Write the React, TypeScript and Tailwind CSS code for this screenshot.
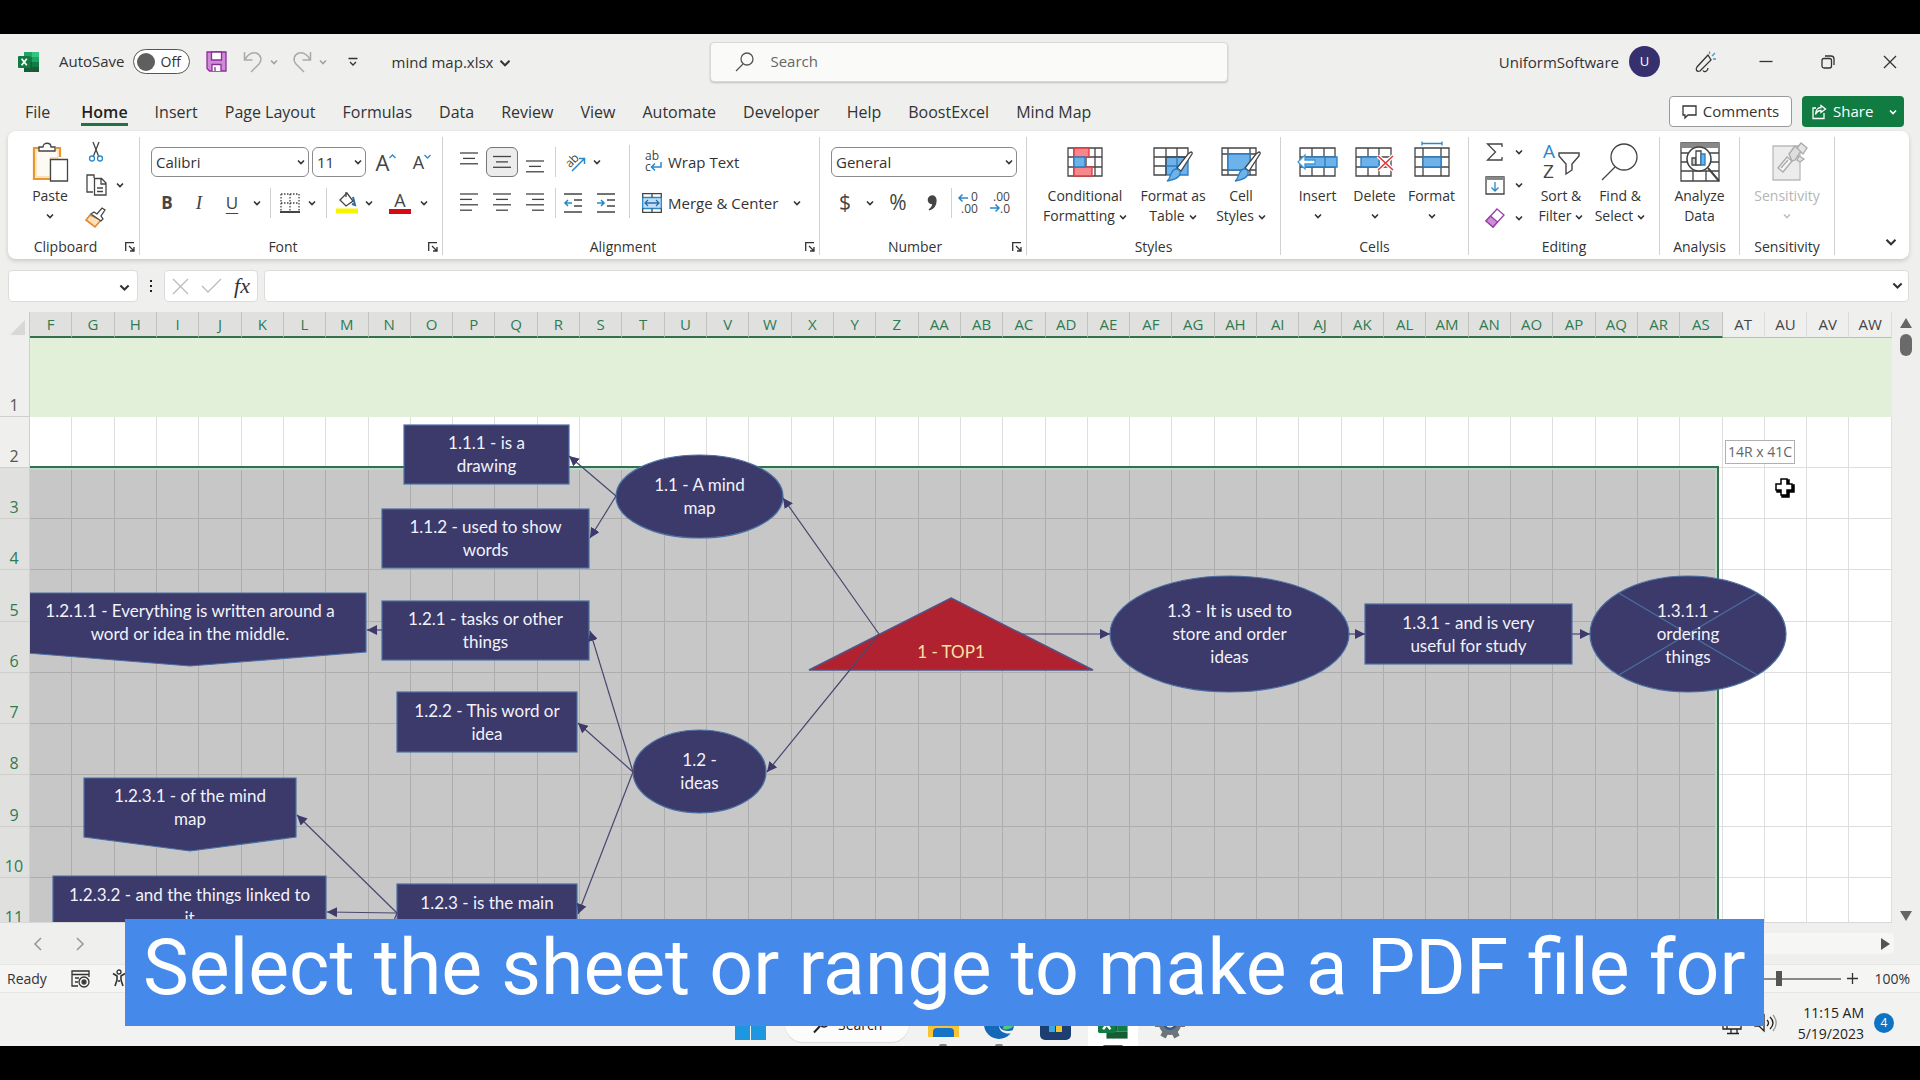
import type { ReactNode } from "react";

const TABS = [
  "File",
  "Home",
  "Insert",
  "Page Layout",
  "Formulas",
  "Data",
  "Review",
  "View",
  "Automate",
  "Developer",
  "Help",
  "BoostExcel",
  "Mind Map",
];

const COLUMNS = [
  ..."FGHIJKLMNOPQRSTUVWXYZ".split(""),
  ..."ABCDEFGHIJKLMNOPQRSTUVW".split("").map((c) => `A${c}`),
];
const SELECTED_COLUMNS = 40;

const ROW_HEIGHTS = [79, 51, 51, 51, 52, 51, 51, 51, 52, 51, 51];

type Shape = "rect" | "ellipse" | "pennant" | "triangle" | "junction";

type MapNode = {
  x: number;
  y: number;
  w: number;
  h: number;
  shape: Shape;
  lines: string[];
};

const NODES: MapNode[] = [
  { x: 374, y: 87, w: 165, h: 59, shape: "rect", lines: ["1.1.1 - is a", "drawing"] },
  { x: 352, y: 171, w: 207, h: 59, shape: "rect", lines: ["1.1.2 - used to show", "words"] },
  { x: -16, y: 255, w: 352, h: 59, shape: "pennant", lines: ["1.2.1.1 - Everything is written around a", "word or idea in the middle."] },
  { x: 352, y: 263, w: 207, h: 59, shape: "rect", lines: ["1.2.1 - tasks or other", "things"] },
  { x: 367, y: 354, w: 180, h: 60, shape: "rect", lines: ["1.2.2 - This word or", "idea"] },
  { x: 54, y: 440, w: 212, h: 59, shape: "pennant", lines: ["1.2.3.1 - of the mind", "map"] },
  { x: 23, y: 538, w: 273, h: 60, shape: "pennant", lines: ["1.2.3.2 - and the things linked to", "it"] },
  { x: 367, y: 546, w: 180, h: 38, shape: "rect", lines: ["1.2.3 - is the main"] },
  { x: 586, y: 117, w: 167, h: 83, shape: "ellipse", lines: ["1.1 - A mind", "map"] },
  { x: 603, y: 392, w: 133, h: 83, shape: "ellipse", lines: ["1.2 -", "ideas"] },
  { x: 779, y: 260, w: 284, h: 72, shape: "triangle", lines: ["1 - TOP1"] },
  { x: 1080, y: 238, w: 239, h: 116, shape: "ellipse", lines: ["1.3 - It is used to", "store and order", "ideas"] },
  { x: 1335, y: 266, w: 207, h: 60, shape: "rect", lines: ["1.3.1 - and is very", "useful for study"] },
  { x: 1560, y: 238, w: 196, h: 116, shape: "junction", lines: ["1.3.1.1 -", "ordering", "things"] },
];

const LINKS = [
  [586, 158, 539, 118],
  [586, 158, 560, 200],
  [849, 296, 753, 160],
  [849, 296, 737, 434],
  [992, 296, 1080, 296],
  [1319, 296, 1335, 296],
  [1542, 296, 1560, 296],
  [603, 434, 560, 293],
  [603, 434, 548, 385],
  [603, 434, 548, 576],
  [352, 292, 337, 292],
  [367, 575, 267, 477],
  [367, 575, 297, 574],
  [367, 575, 355, 604],
];

/* ---------- small shared pieces ---------- */

function Icon({ w = 20, h = w, children }: { w?: number; h?: number; children: ReactNode }) {
  return (
    <svg width={w} height={h} viewBox={`0 0 ${w} ${h}`} fill="none" stroke="#444" strokeWidth="1.3" className="shrink-0 overflow-visible" aria-hidden="true">
      {children}
    </svg>
  );
}

function Chevron({ size = 8, color = "#333", width = 1.6 }: { size?: number; color?: string; width?: number }) {
  return (
    <svg width={size} height={size} viewBox="0 0 8 8" fill="none" stroke={color} strokeWidth={width} className="inline-block shrink-0" aria-hidden="true">
      <path d="M1 2.5 4 5.5 7 2.5" />
    </svg>
  );
}

function Drop({ label, className = "w-4" }: { label: string; className?: string }) {
  return (
    <button type="button" aria-label={label} className={`flex h-[30px] items-center justify-center ${className}`}>
      <Chevron />
    </button>
  );
}

function Tool({ label, className = "w-7", children }: { label: string; className?: string; children: ReactNode }) {
  return (
    <button type="button" aria-label={label} className={`flex h-[30px] items-center justify-center ${className}`}>
      {children}
    </button>
  );
}

function Divider({ className = "mx-[5px]" }: { className?: string }) {
  return <span className={`h-[30px] w-px bg-[#d0d0d0] ${className}`} />;
}

function Combo({ label, value, className }: { label: string; value: string; className: string }) {
  return (
    <span className={`relative flex h-[30px] items-center ${className}`}>
      <select aria-label={label} defaultValue={value} className="h-full w-full appearance-none rounded-md border border-[#8a8a8a] bg-white pl-1 text-[15px] text-[#333]">
        <option>{value}</option>
      </select>
      <span className="pointer-events-none absolute right-1 flex">
        <Chevron />
      </span>
    </span>
  );
}

function Group({ label, className, launcher = false, children }: { label: string; className: string; launcher?: boolean; children: ReactNode }) {
  return (
    <section aria-label={label} className={`flex shrink-0 flex-col justify-between border-r border-[#d0d0d0] ${className}`}>
      {children}
      <div className={`relative text-center text-[14px] leading-4 text-[#333] ${launcher ? "pr-4" : ""}`}>
        {label}
        {launcher && (
          <button type="button" aria-label={`${label} settings`} className="absolute right-1 bottom-[3px]">
            <Icon w={10}>
              <path d="M.7 9V.7H9M4 4l5 5M9 5v4H5" stroke="#333" />
            </Icon>
          </button>
        )}
      </div>
    </section>
  );
}

function Large({ lines, icon, className, arrow, muted = false }: { lines: string[]; icon: ReactNode; className: string; arrow?: "inline" | "below"; muted?: boolean }) {
  return (
    <button type="button" className={`flex flex-col items-center pt-[5px] text-[14px] leading-5 ${muted ? "text-[#b5b5b5]" : "text-[#333]"} ${className}`}>
      <span className="mb-1 flex h-10 items-center justify-center">{icon}</span>
      {lines.map((line, i) => (
        <span key={line} className="whitespace-nowrap">
          {line}
          {arrow === "inline" && i === lines.length - 1 && (
            <span className="ml-1">
              <Chevron />
            </span>
          )}
        </span>
      ))}
      {arrow === "below" && (
        <span className="mt-[6px] flex">
          <Chevron color={muted ? "#c0c0c0" : "#333"} />
        </span>
      )}
    </button>
  );
}

function Lines({ rows, y = 2 }: { rows: [number, number][]; y?: number }) {
  return (
    <Icon w={18} h={22}>
      {rows.map(([x1, x2], i) => (
        <path key={i} d={`M${x1} ${y + i * 5.4}H${x2}`} stroke="#444" />
      ))}
    </Icon>
  );
}

function ExcelLogo({ size = 22 }: { size?: number }) {
  return (
    <svg width={size} height={size} viewBox="0 0 22 22" aria-hidden="true">
      <path d="M6 1h8v5H6z" fill="#21a366" />
      <path d="M14 1h7v5h-7z" fill="#33c481" />
      <path d="M6 6h8v5H6z" fill="#107c41" />
      <path d="M14 6h7v5h-7z" fill="#21a366" />
      <path d="M6 11h8v5H6z" fill="#185c37" />
      <path d="M14 11h7v5h-7z" fill="#107c41" />
      <path d="M6 16h15v5H6z" fill="#185c37" />
      <rect x="0" y="5" width="12.5" height="12" rx="1" fill="#107c41" />
      <path d="m3.6 7.7 5.2 6.6M8.8 7.7l-5.2 6.6" stroke="#fff" strokeWidth="1.7" />
    </svg>
  );
}

function Brush() {
  return (
    <>
      <path d="M38 10c1 0 1.500 1 1 2L28 29l-4-3L35 12z" fill="#fff" stroke="#444" />
      <path d="M23 27c3 0 5 2 4 5-1 4-6 6-13 7 3-2 3-5 4-7s2-5 5-5z" fill="#6db3ea" stroke="#2b7cc0" />
    </>
  );
}

/* ---------- window chrome ---------- */

function TitleBar() {
  return (
    <header className="flex h-[55px] shrink-0 items-center pr-[23px] pl-[18px] text-[15px] text-[#333]">
      <ExcelLogo />
      <label htmlFor="autosave" className="ml-[19px]">
        AutoSave
      </label>
      <button id="autosave" type="button" role="switch" aria-checked="false" className="ml-2 flex h-[25px] w-[57px] items-center gap-[6px] rounded-full border border-[#555] bg-white px-[3px] text-[14px]">
        <span className="size-[18px] rounded-full bg-[#5f5f5f]" />
        Off
      </button>
      <button type="button" aria-label="Save" className="ml-4">
        <Icon w={21}>
          <path d="M1 1h19v19H3.500L1 17.500z" fill="#d08ad8" stroke="#8a2f98" />
          <path d="M5.500 1v8h10V1zM6 20v-6.500h9V20" fill="#fff" stroke="#8a2f98" />
          <path d="M9 16v4" stroke="#8a2f98" />
        </Icon>
      </button>
      <button type="button" aria-label="Undo" className="ml-4">
        <Icon w={20} h={22}>
          <path d="M1.500 1v8h8M1.500 9C5 3 9 1 13 2c5 1.500 6.500 7 3 11l-8 8" stroke="#aaa" strokeWidth="1.500" />
        </Icon>
      </button>
      <Drop label="Undo history" className="ml-[3px] w-4 opacity-40" />
      <button type="button" aria-label="Redo" className="ml-[10px]">
        <Icon w={20} h={22}>
          <path d="M18.500 1v8h-8M18.500 9C15 3 11 1 7 2c-5 1.500-6.500 7-3 11l8 8" stroke="#aaa" strokeWidth="1.500" />
        </Icon>
      </button>
      <Drop label="Redo history" className="ml-[3px] w-4 opacity-40" />
      <button type="button" aria-label="Customize toolbar" className="ml-[17px]">
        <Icon w={10} h={10}>
          <path d="M.5 1.500h9M2 5l3 3 3-3" stroke="#333" />
        </Icon>
      </button>
      <button type="button" className="ml-[34px] flex items-center gap-[6px] pt-[2px] whitespace-nowrap">
        mind map.xlsx
        <Chevron size={12} width={1.3} />
      </button>

      <div className="ml-[199px] flex h-10 w-[518px] items-center gap-4 rounded-[4px] border border-[#d8d8d8] bg-[#fafaf9] px-6 shadow-[0_1px_2px_rgba(0,0,0,0.2)]">
        <Icon w={19} h={20}>
          <circle cx="12" cy="7" r="6" stroke="#555" />
          <path d="m8 12-7 7" stroke="#555" />
        </Icon>
        <input aria-label="Search" placeholder="Search" className="flex-1 bg-transparent outline-none placeholder:text-[#666]" />
      </div>

      <div className="ml-auto flex items-center">
        <span className="pt-[2px]">UniformSoftware</span>
        <span className="ml-[10px] flex size-[31px] items-center justify-center rounded-full bg-[#37306f] text-[13px] text-white">U</span>
        <button type="button" aria-label="What's new" className="ml-[35px]">
          <Icon w={22} h={22}>
            <path d="M13 4 2 16c-2 3 0 5 3 4L16 9zM8 19.500c1 2 5 1 5-2.500" stroke="#333" />
            <path d="M14.500 3V.5M17 5l3-3M18 8h3" stroke="#3b9bd8" />
          </Icon>
        </button>
        <button type="button" aria-label="Minimize" className="ml-[42px]">
          <Icon w={14}>
            <path d="M.5 6.500h13" stroke="#333" />
          </Icon>
        </button>
        <button type="button" aria-label="Restore" className="ml-12">
          <Icon w={14}>
            <rect x="1" y="3.500" width="9.500" height="9.500" rx="2" stroke="#333" />
            <path d="M4 1h6a3 3 0 0 1 3 3v6" stroke="#333" />
          </Icon>
        </button>
        <button type="button" aria-label="Close" className="ml-12">
          <Icon w={14}>
            <path d="m1 1 12 12M13 1 1 13" stroke="#333" />
          </Icon>
        </button>
      </div>
    </header>
  );
}

function TabRow() {
  return (
    <nav className="flex h-[42px] shrink-0 items-center pr-4 pl-[25px] text-[16px] text-[#333]">
      <div className="flex gap-[27px]">
        {TABS.map((tab) => (
          <a
            key={tab}
            href="#"
            className={
              tab === "Home"
                ? "ml-1 border-b-[3px] border-[#217346] pt-[6px] leading-[22px] font-semibold text-[#222]"
                : "border-b-[3px] border-transparent pt-[6px] leading-[22px] whitespace-nowrap"
            }
          >
            {tab}
          </a>
        ))}
      </div>
      <div className="ml-auto flex gap-[10px] pt-[3px]">
        <button type="button" className="flex h-[31px] w-[123px] items-center justify-center gap-[6px] rounded border border-[#999] bg-white text-[15px]">
          <Icon w={15}>
            <path d="M1 2h13v9H6l-3 3v-3H1z" stroke="#333" />
          </Icon>
          Comments
        </button>
        <button type="button" className="flex h-[31px] w-[102px] items-center rounded bg-[#107c41] pr-[7px] pl-[9px] text-[15px] text-white">
          <Icon w={16}>
            <path d="M5 4H2v10.500h11V9" stroke="#fff" />
            <path d="M10 1.500 14.500 5 10 8.500V6.500C7 6.500 5.500 8 4.500 10.500 4.500 6 7 3.500 10 3.500z" stroke="#fff" />
          </Icon>
          <span className="mr-auto ml-[6px]">Share</span>
          <Chevron color="#fff" />
        </button>
      </div>
    </nav>
  );
}

/* ---------- ribbon ---------- */

function ClipboardGroup() {
  return (
    <Group label="Clipboard" className="w-[132px]" launcher>
      <div className="flex pl-3">
        <Large
          className="w-[60px]"
          lines={["Paste"]}
          arrow="below"
          icon={
            <Icon w={36} h={40}>
              <path d="M7 6H2v31h17M24 6h4v9" stroke="#e8962e" strokeWidth="2.2" />
              <path d="M4 8h22v8h-8v19H4z" fill="#fdfaf4" stroke="#f6d9ae" />
              <path d="M7 9V5h4c0-5 8-5 8 0h4v4z" fill="#fff" />
              <path d="M18.500 17.500h17V39h-17z" fill="#fff" />
            </Icon>
          }
        />
        <div className="flex flex-col gap-[3px]">
          <Tool label="Cut" className="w-8">
            <Icon w={14} h={20}>
              <path d="m4 0 5.500 14M10 0 4.500 14" />
              <circle cx="3" cy="16.500" r="2.500" stroke="#2b88c8" />
              <circle cx="11" cy="16.500" r="2.500" stroke="#2b88c8" />
            </Icon>
          </Tool>
          <div className="flex">
            <Tool label="Copy" className="w-8">
              <Icon w={21} h={22}>
                <path d="M7 18H1V1h7v3M8.500 4.500h7L20 9v12H8.500zM15 5v5h5M11 14h6M11 17.500h6" />
              </Icon>
            </Tool>
            <Drop label="Copy options" />
          </div>
          <Tool label="Format Painter" className="w-8">
            <Icon w={22} h={22}>
              <path d="m5 8-4 5 9 7 6-7z" fill="#fbe0bd" stroke="#e8862e" strokeWidth="1.600" />
              <path d="m6 7 3-2 3 2 5-6 3 2-4 6 2 3-2 2z" fill="#fff" />
            </Icon>
          </Tool>
        </div>
      </div>
    </Group>
  );
}

function FontGroup() {
  return (
    <Group label="Font" className="w-[303px]" launcher>
      <div className="flex flex-col gap-[11px] pt-[10px] pl-[11px]">
        <div className="flex items-center">
          <Combo label="Font" value="Calibri" className="w-[158px]" />
          <Combo label="Font size" value="11" className="ml-[3px] w-[54px]" />
          <Tool label="Increase font size" className="w-10 text-[22px] text-[#444]">
            A
            <Icon w={7} h={16}>
              <path d="m.5 4 3-3 3 3" stroke="#2b88c8" />
            </Icon>
          </Tool>
          <Tool label="Decrease font size" className="w-8 text-[18px] text-[#444]">
            A
            <Icon w={7} h={16}>
              <path d="m.5 1 3 3 3-3" stroke="#2b88c8" />
            </Icon>
          </Tool>
        </div>
        <div className="flex items-center text-[17px] text-[#444]">
          <Tool label="Bold" className="w-8 font-bold">
            B
          </Tool>
          <Tool label="Italic" className="w-8 font-['Liberation_Serif',serif] text-[19px] italic">
            I
          </Tool>
          <Tool label="Underline" className="w-[34px]">
            <span className="underline underline-offset-4">U</span>
          </Tool>
          <Drop label="Underline style" />
          <Divider />
          <Tool label="Borders">
            <Icon w={20} h={20}>
              <path d="M1 1h18M1 1v17M19 1v17M10 1v17M1 10h18" strokeDasharray="1.5 1.5" />
              <path d="M0 19h20" strokeWidth="2" />
            </Icon>
          </Tool>
          <Drop label="Border options" />
          <Divider className="mx-[6px]" />
          <Tool label="Fill color">
            <Icon w={22} h={22}>
              <path d="m4 8 7-7 6 8-7 5z" fill="#fff" />
              <path d="M10 5V0" />
              <path d="m17 5 2 8-3-1" stroke="#2b6ca8" strokeWidth="2" />
              <path d="M0 19h22" stroke="#f8f400" strokeWidth="5" />
            </Icon>
          </Tool>
          <Drop label="Fill options" />
          <Tool label="Font color" className="ml-[9px] w-7">
            <span className="border-b-[5px] border-[#d40b14] px-[5px] text-[18px] leading-[17px]">A</span>
          </Tool>
          <Drop label="Font color options" className="w-5" />
        </div>
      </div>
    </Group>
  );
}

function AlignmentGroup() {
  return (
    <Group label="Alignment" className="w-[377px]" launcher>
      <div className="flex">
        <div className="flex flex-col gap-[11px] pt-[10px] pl-[10px]">
          <div className="flex items-center">
            <Tool label="Top align" className="w-8">
              <Lines y={2} rows={[[0, 18], [3, 15], [0, 18]]} />
            </Tool>
            <Tool label="Middle align" className="mx-px w-8 rounded-md border border-[#777] bg-[#ececec]">
              <Lines y={5.5} rows={[[0, 18], [3, 15], [0, 18]]} />
            </Tool>
            <Tool label="Bottom align" className="w-8">
              <Lines y={10} rows={[[0, 18], [3, 15], [0, 18]]} />
            </Tool>
            <Divider className="ml-1" />
            <Tool label="Orientation" className="ml-1 w-8">
              <svg width="22" height="22" viewBox="0 0 22 22" fill="none" className="overflow-visible" aria-hidden="true">
                <text x="1" y="14" fontSize="12" fill="#444" transform="rotate(-45 7 11)">ab</text>
                <path d="M7 20 19 8M14 7.500h5.500V13" stroke="#2b88c8" strokeWidth="1.500" />
              </svg>
            </Tool>
            <Drop label="Orientation options" className="w-[10px]" />
          </div>
          <div className="flex items-center">
            <Tool label="Align left" className="w-8">
              <Lines rows={[[0, 18], [0, 12], [0, 18], [0, 12]]} />
            </Tool>
            <Tool label="Center" className="mx-px w-8">
              <Lines rows={[[0, 18], [3, 15], [0, 18], [3, 15]]} />
            </Tool>
            <Tool label="Align right" className="w-8">
              <Lines rows={[[0, 18], [6, 18], [0, 18], [6, 18]]} />
            </Tool>
            <Divider className="ml-1" />
            <Tool label="Decrease indent" className="w-[34px]">
              <Icon w={18} h={20}>
                <path d="M0 1h18M10 7h8M10 13h8M0 19h18" />
                <path d="M8 10H1M4 7l-3 3 3 3" stroke="#2b88c8" strokeWidth="1.6" />
              </Icon>
            </Tool>
            <Tool label="Increase indent" className="w-8">
              <Icon w={18} h={20}>
                <path d="M0 1h18M10 7h8M10 13h8M0 19h18" />
                <path d="M0 10h7M4 7l3 3-3 3" stroke="#2b88c8" strokeWidth="1.6" />
              </Icon>
            </Tool>
          </div>
        </div>
        <div className="mt-2 ml-[7px] border-l border-[#d0d0d0] pt-[2px] pl-3">
          <button type="button" className="flex h-[30px] items-center gap-[6px] text-[15px] text-[#333]">
            <svg width="20" height="22" viewBox="0 0 20 22" fill="none" className="overflow-visible" aria-hidden="true">
              <text x="3" y="9" fontSize="12" fill="#444">ab</text>
              <text x="3" y="20" fontSize="12" fill="#444">c</text>
              <path d="M19 11v5h-9M13 12.500l-3.500 3.500 3.500 3.500" stroke="#2b88c8" strokeWidth="1.500" />
            </svg>
            Wrap Text
          </button>
          <div className="mt-[11px] flex items-center">
            <button type="button" className="flex h-[30px] items-center gap-[6px] text-[15px] whitespace-nowrap text-[#333]">
              <Icon w={20} h={20}>
                <path d="M.7 4.500h18.600v11H.7z" fill="#bfe0f7" stroke="#2b88c8" />
                <path d="M.7 4.500V.7h18.600v3.800M.7 15.500v3.800h18.600v-3.800M10 .7v3.800M10 15.500v3.800" />
                <path d="M3 10h14M6 7l-3 3 3 3M14 7l3 3-3 3" stroke="#2b6ca8" />
              </Icon>
              Merge &amp; Center
            </button>
            <Drop label="Merge options" className="ml-[11px] w-4" />
          </div>
        </div>
      </div>
    </Group>
  );
}

function NumberGroup() {
  return (
    <Group label="Number" className="w-[207px]" launcher>
      <div className="flex flex-col gap-[11px] pt-[10px] pl-[11px] text-[#444]">
        <Combo label="Number format" value="General" className="w-[186px]" />
        <div className="flex items-center text-[21px]">
          <Tool label="Accounting format">$</Tool>
          <Drop label="Accounting options" className="ml-[3px] w-4" />
          <Tool label="Percent style" className="ml-1 w-8">
            %
          </Tool>
          <Tool label="Comma style" className="ml-[2px] w-8">
            <Icon w={10} h={17}>
              <path d="M5 1a3.800 3.800 0 1 0 1 7.500C6 11 4.500 13 2 15c5-1.500 7-5.500 7-9.500C9 2.500 7.500 1 5 1z" fill="#444" />
            </Icon>
          </Tool>
          <Divider className="ml-[3px]" />
          <Tool label="Increase decimal" className="w-8">
            <svg width="21" height="22" viewBox="0 0 21 22" fill="none" className="overflow-visible" aria-hidden="true">
              <text x="13" y="9" fontSize="12" fill="#444">0</text>
              <text x="3" y="21" fontSize="12" fill="#444">.00</text>
              <path d="M10 6H1M4.500 2.500 1 6l3.500 3.500" stroke="#2b88c8" strokeWidth="1.500" />
            </svg>
          </Tool>
          <Tool label="Decrease decimal" className="w-8">
            <svg width="21" height="22" viewBox="0 0 21 22" fill="none" className="overflow-visible" aria-hidden="true">
              <text x="3" y="9" fontSize="12" fill="#444">.00</text>
              <text x="10" y="21" fontSize="12" fill="#444">.0</text>
              <path d="M0 16h9M5.500 12.500 9 16l-3.500 3.500" stroke="#2b88c8" strokeWidth="1.500" />
            </svg>
          </Tool>
        </div>
      </div>
    </Group>
  );
}

function StylesGroup() {
  return (
    <Group label="Styles" className="w-[254px]">
      <div className="flex pl-[13px]">
        <Large
          className="w-[90px]"
          lines={["Conditional", "Formatting"]}
          arrow="inline"
          icon={
            <Icon w={36} h={30}>
              <path d="M1 1h34v28H1zM1 10h34M1 20h34M7 1v28M19 1v28M28 1v28" />
              <path d="M7 1h15v9H7zM7 20h18v9H7z" fill="#f8878c" stroke="#d83b42" />
              <path d="M7 10h11v10H7z" fill="#6db3ea" stroke="#2b7cc0" />
            </Icon>
          }
        />
        <Large
          className="w-[86px]"
          lines={["Format as", "Table"]}
          arrow="inline"
          icon={
            <Icon w={40} h={40}>
              <path d="M13 15h22v18H13z" fill="#6db3ea" stroke="#2b7cc0" />
              <path d="M13 33H1V6h34v9M1 15h34M1 24h12M13 6v27M24 6v9" />
              <path d="M24 15v12M13 24h14" stroke="#2b7cc0" />
              <Brush />
            </Icon>
          }
        />
        <Large
          className="w-[50px]"
          lines={["Cell", "Styles"]}
          arrow="inline"
          icon={
            <Icon w={40} h={40}>
              <path d="M1 6h34v27H1zM1 12h34M1 28h34M7 6v27M29 6v27" />
              <path d="M7 12h22v16H7z" fill="#6db3ea" stroke="#2b7cc0" />
              <Brush />
            </Icon>
          }
        />
      </div>
    </Group>
  );
}

function CellsGroup() {
  return (
    <Group label="Cells" className="w-[188px]">
      <div className="flex pl-2">
        <Large
          className="w-[57px]"
          lines={["Insert"]}
          arrow="below"
          icon={
            <Icon w={42} h={30}>
              <path d="M3 1h35v28H3zM15 1v28M27 1v28M3 10h35M3 20h35" />
              <path d="M8 10h32v10H8z" fill="#6db3ea" stroke="#2b7cc0" />
              <path d="M28 10v10" stroke="#2b7cc0" />
              <path d="M18 13H8V8l-7 7 7 7v-5h10z" fill="#fff" stroke="#3b9bd8" />
            </Icon>
          }
        />
        <Large
          className="w-[57px]"
          lines={["Delete"]}
          arrow="below"
          icon={
            <Icon w={40} h={30}>
              <path d="M1 1h35v28H1zM13 1v28M24 1v28M1 10h35M1 20h35" />
              <path d="M6 10h18v10H6z" fill="#6db3ea" stroke="#2b7cc0" />
              <path d="m23 9 15 14M38 9 23 23" stroke="#fff" strokeWidth="4" />
              <path d="m23 9 15 14M38 9 23 23" stroke="#e0343c" strokeWidth="1.500" />
            </Icon>
          }
        />
        <Large
          className="w-[57px]"
          lines={["Format"]}
          arrow="below"
          icon={
            <Icon w={36} h={40}>
              <path d="M1 6h34v28H1zM9 6v28M27 6v28M1 15h34M1 25h34" />
              <path d="M9 15h18v10H9z" fill="#6db3ea" stroke="#2b7cc0" />
              <path d="M8 1.500h20M8-.5v4M28-.5v4" stroke="#2b88c8" />
            </Icon>
          }
        />
      </div>
    </Group>
  );
}

function EditingGroup() {
  return (
    <Group label="Editing" className="w-[191px]">
      <div className="flex pl-[14px]">
        <div className="flex flex-col gap-[3px]">
          <div className="flex">
            <Tool label="AutoSum" className="w-6">
              <Icon w={18} h={18}>
                <path d="M16 4V1H1.500l8 8-8 8H16v-3" />
              </Icon>
            </Tool>
            <Drop label="AutoSum options" className="w-6" />
          </div>
          <div className="flex">
            <Tool label="Fill" className="w-6">
              <Icon w={20} h={19}>
                <path d="M1 1h18v17H1z" />
                <path d="M1 2.500h18" stroke="#888" strokeWidth="3" />
                <path d="M10 6v9M6.500 11.500 10 15l3.500-3.500" stroke="#2b88c8" />
              </Icon>
            </Tool>
            <Drop label="Fill options" className="w-6" />
          </div>
          <div className="flex">
            <Tool label="Clear" className="w-6">
              <Icon w={20} h={20}>
                <path d="m12 1 7 6L8 19l-7-6z" fill="#fff" stroke="#9a3fa8" />
                <path d="m5.500 8 7 6L8 19l-7-6z" fill="#d08ad8" stroke="#9a3fa8" />
              </Icon>
            </Tool>
            <Drop label="Clear options" className="w-6" />
          </div>
        </div>
        <Large
          className="w-[60px]"
          lines={["Sort &", "Filter"]}
          arrow="inline"
          icon={
            <svg width="38" height="36" viewBox="0 0 38 36" fill="none" className="overflow-visible" aria-hidden="true">
              <text x="1" y="14" fontSize="19" fill="#2b88c8">A</text>
              <text x="1" y="34" fontSize="19" fill="#444">Z</text>
              <path d="M17 9h20v3l-7 8v6l-6 4V20l-7-8z" stroke="#444" strokeWidth="1.400" />
            </svg>
          }
        />
        <Large
          className="w-[58px]"
          lines={["Find &", "Select"]}
          arrow="inline"
          icon={
            <Icon w={38} h={38}>
              <circle cx="23" cy="14" r="13" />
              <path d="M14 24 1 37" />
            </Icon>
          }
        />
      </div>
    </Group>
  );
}

function Ribbon() {
  return (
    <div className="mr-[11px] ml-2 flex h-[128px] shrink-0 rounded-lg bg-white pt-[6px] pb-1 shadow-[0_2px_4px_rgba(0,0,0,0.16)]">
      <ClipboardGroup />
      <FontGroup />
      <AlignmentGroup />
      <NumberGroup />
      <StylesGroup />
      <CellsGroup />
      <EditingGroup />
      <Group label="Analysis" className="w-20">
        <Large
          className="w-full"
          lines={["Analyze", "Data"]}
          icon={
            <Icon w={40} h={40}>
              <path d="M1 1h38v38H1zM1 11h38M1 20h38M1 29h38M13 29v10M26 29v10" />
              <path d="M1 3.500h38" stroke="#888" strokeWidth="5" />
              <circle cx="19" cy="17" r="12" fill="#fff" strokeWidth="1.600" />
              <path d="m28 26 11 13" strokeWidth="2" />
              <path d="M12 16h4v7h-4z" fill="#ccc" />
              <path d="M16 9h5v14h-5z" fill="#fff" />
              <path d="M21 12h4v11h-4z" fill="#6db3ea" stroke="#2b7cc0" />
            </Icon>
          }
        />
      </Group>
      <Group label="Sensitivity" className="w-[95px]">
        <Large
          className="w-full"
          lines={["Sensitivity"]}
          arrow="below"
          muted
          icon={
            <Icon w={30} h={40}>
              <path d="M1 4h27v34H1z" fill="#ececec" stroke="#bbb" />
              <path d="m6 26 9-11 5 4-9 11z" fill="#f6f6f6" stroke="#aaa" />
              <path d="m9 26 7-8" stroke="#aaa" />
              <path d="m17 12 6-8 6 5-6 9-3 1z" fill="#ddd" stroke="#aaa" />
              <path d="m25 6 4-5 6 5-4 6zM27 14l5 3-4 3-3-2z" fill="#e4e4e4" stroke="#aaa" />
            </Icon>
          }
        />
      </Group>
      <button type="button" aria-label="Collapse ribbon" className="mt-auto mr-3 mb-[3px] ml-auto">
        <Chevron size={12} width={1.4} />
      </button>
    </div>
  );
}

function FormulaBar() {
  return (
    <div className="mt-[11px] mr-[11px] mb-[10px] ml-2 flex h-8 shrink-0 items-stretch">
      <div className="flex w-[130px] items-center rounded border border-[#dcdcdc] bg-white pr-[7px]">
        <input aria-label="Name box" className="min-w-0 flex-1 bg-transparent px-2 outline-none" />
        <button type="button" aria-label="Name list">
          <Chevron size={11} width={1.5} />
        </button>
      </div>
      <div className="flex w-[26px] flex-col items-center justify-center gap-[3px]">
        <span className="size-[2px] bg-[#222]" />
        <span className="size-[2px] bg-[#222]" />
        <span className="size-[2px] bg-[#222]" />
      </div>
      <div className="flex w-[94px] items-center justify-between rounded border border-[#dcdcdc] bg-white px-[7px]">
        <button type="button" aria-label="Cancel">
          <Icon w={17}>
            <path d="m1 1 15 15M16 1 1 16" stroke="#bbb" />
          </Icon>
        </button>
        <button type="button" aria-label="Enter">
          <Icon w={21} h={16}>
            <path d="m1 8 6 6L20 1" stroke="#bbb" />
          </Icon>
        </button>
        <button type="button" aria-label="Insert function" className="font-['Liberation_Serif',serif] text-[22px] leading-6 text-[#333] italic">
          fx
        </button>
      </div>
      <div className="ml-[6px] flex flex-1 items-center rounded border border-[#dcdcdc] bg-white pr-[5px]">
        <input aria-label="Formula" className="min-w-0 flex-1 bg-transparent px-2 outline-none" />
        <button type="button" aria-label="Expand formula bar" className="mb-1">
          <Chevron size={11} width={1.5} />
        </button>
      </div>
    </div>
  );
}

/* ---------- sheet ---------- */

function NodeShape({ x, y, w, h, shape }: MapNode) {
  const cx = x + w / 2;
  const cy = y + h / 2;
  if (shape === "triangle") {
    return <polygon points={`${cx},${y} ${x + w},${y + h} ${x},${y + h}`} fill="#b12231" stroke="#4f5688" strokeWidth="1.500" />;
  }
  if (shape === "pennant") {
    return <polygon points={`${x},${y} ${x + w},${y} ${x + w},${y + h} ${cx},${y + h + 14} ${x},${y + h}`} />;
  }
  if (shape === "rect") {
    return <rect x={x} y={y} width={w} height={h} />;
  }
  const dx = (w / 2) * Math.SQRT1_2;
  const dy = (h / 2) * Math.SQRT1_2;
  return (
    <>
      <ellipse cx={cx} cy={cy} rx={w / 2} ry={h / 2} />
      {shape === "junction" && <path d={`M${cx - dx} ${cy - dy}L${cx + dx} ${cy + dy}M${cx + dx} ${cy - dy}L${cx - dx} ${cy + dy}`} />}
    </>
  );
}

function MindMap() {
  return (
    <div className="absolute top-[26px] right-0 bottom-0 left-[30px] overflow-hidden">
      {/* selected range */}
      <div className="absolute top-[128px] -bottom-4 -left-2 w-[1697px] border-2 border-[#34704f] bg-black/22 shadow-[inset_0_0_0_2px_#b9dcc8]" />

      <svg className="absolute inset-0 size-full" aria-hidden="true">
        <defs>
          <marker id="arrow" viewBox="0 0 10 10" refX="10" refY="5" markerWidth="10" markerHeight="10" markerUnits="userSpaceOnUse" orient="auto">
            <path d="M0 0 10 5 0 10z" fill="#3b3a6b" />
          </marker>
        </defs>
        <g fill="#3b3a6b" stroke="#4a70a4" strokeWidth="1.200">
          {NODES.map((node) => (
            <NodeShape key={node.lines[0]} {...node} />
          ))}
        </g>
        <g stroke="#4a476f" strokeWidth="1.200">
          {LINKS.map(([x1, y1, x2, y2]) => (
            <line key={`${x1}-${x2}-${y2}`} x1={x1} y1={y1} x2={x2} y2={y2} markerEnd="url(#arrow)" />
          ))}
        </g>
      </svg>

      {NODES.map(({ x, y, w, h, shape, lines }) => (
        <div
          key={lines[0]}
          className={`absolute flex flex-col items-center pb-px font-[Lato,sans-serif] text-[17px] leading-[23px] whitespace-nowrap ${
            shape === "triangle" ? "justify-end text-[#fbe3a2]" : "justify-center text-[#f2f2fa]"
          }`}
          style={{ left: x, top: y, width: w, height: shape === "triangle" ? h - 6 : h }}
        >
          {lines.map((line) => (
            <span key={line}>{line}</span>
          ))}
        </div>
      ))}

      <div className="absolute top-[102px] left-[1695px] border border-[#b0b0b0] bg-white px-[2px] text-[14px] leading-[22px] text-[#666]">14R x 41C</div>

      <svg className="absolute top-[140px] left-[1745px]" width="20" height="20" viewBox="0 0 20 20" aria-hidden="true">
        <path d="M7 2h7v5h5v7h-5v5H7v-5H2V7h5z" fill="#000" stroke="#000" strokeWidth="1.500" />
        <path d="M6 1h6v5h5v6h-5v5H6v-5H1V6h5z" fill="#fff" stroke="#000" strokeWidth="1.500" />
      </svg>
    </div>
  );
}

function Sheet() {
  return (
    <main className="flex min-h-0 flex-1">
      <div className="relative min-w-0 flex-1 overflow-hidden border-b border-[#d8d8d8]">
        <table className="w-full table-fixed border-separate border-spacing-0 text-[15px]">
          <thead>
            <tr className="h-[26px] leading-4">
              <th className="w-[30px] border-r border-[#c8c8c8] p-0">
                <svg width="15" height="15" viewBox="0 0 15 15" className="mt-1 ml-[10px]" aria-hidden="true">
                  <path d="M15 0v15H0z" fill="#d8d8d6" />
                </svg>
              </th>
              {COLUMNS.map((col, i) => (
                <th
                  key={col}
                  scope="col"
                  className={
                    i < SELECTED_COLUMNS
                      ? "border-r border-b-2 border-r-[#c3c4c2] border-b-[#34704f] bg-[#e0e1df] p-0 pb-px font-normal text-[#2f7a51]"
                      : "border-r border-b border-r-[#dcdcdc] border-b-[#bcbcbc] p-0 pb-px font-normal text-[#444]"
                  }
                >
                  {col}
                </th>
              ))}
            </tr>
          </thead>
          <tbody>
            {ROW_HEIGHTS.map((height, row) => (
              <tr key={row} style={{ height }}>
                <th
                  scope="row"
                  className={`border-r border-b border-[#cfcfcd] p-0 pr-px pb-px align-bottom text-[16px] leading-5 font-normal ${row > 1 ? "bg-[#e0e1df] text-[#2f7a51]" : "text-[#555]"}`}
                >
                  {row + 1}
                </th>
                {COLUMNS.map((col) => (
                  <td key={col} className={row === 0 ? "bg-[#e2efd9] p-0" : "border-r border-b border-[#dedede] bg-white p-0"} />
                ))}
              </tr>
            ))}
          </tbody>
        </table>
        <MindMap />
      </div>
      <div className="flex w-[28px] flex-col items-center pt-[6px] pb-[2px]">
        <Icon w={12} h={10}>
          <path d="m6 0 6 10H0z" fill="#666" stroke="none" />
        </Icon>
        <div className="mt-[6px] h-[22px] w-3 rounded-full bg-[#6a6a6a]" />
        <span className="mt-auto">
          <Icon w={12} h={10}>
            <path d="m6 10 6-10H0z" fill="#666" stroke="none" />
          </Icon>
        </span>
      </div>
    </main>
  );
}

/* ---------- bottom bars ---------- */

function SheetTabs() {
  return (
    <div className="flex h-[41px] shrink-0 items-center pl-8">
      <button type="button" aria-label="Previous sheet">
        <Icon w={12} h={14}>
          <path d="M9 1 3 7l6 6" stroke="#999" strokeWidth="1.600" />
        </Icon>
      </button>
      <button type="button" aria-label="Next sheet" className="ml-[30px]">
        <Icon w={12} h={14}>
          <path d="m3 1 6 6-6 6" stroke="#999" strokeWidth="1.600" />
        </Icon>
      </button>
      <div className="mr-[26px] ml-auto flex h-[21px] w-[500px] items-center justify-end rounded bg-[#f6f6f5] pr-1">
        <Icon w={9} h={12}>
          <path d="m0 0 9 6-9 6z" fill="#555" stroke="none" />
        </Icon>
      </div>
    </div>
  );
}

function StatusBar() {
  return (
    <div className="flex h-[29px] shrink-0 items-center border-y border-[#e6e6e5] bg-[#f5f5f4] pr-[10px] pl-[7px] text-[14px] text-[#333]">
      Ready
      <span className="ml-6">
        <Icon w={19} h={18}>
          <path d="M7 16H1V1h17v6M1 4.500h17M4 8h4M4 12h3" stroke="#333" />
          <circle cx="13" cy="12" r="5" stroke="#333" />
          <circle cx="13" cy="12" r="2" fill="#333" />
        </Icon>
      </span>
      <span className="ml-[22px]">
        <Icon w={18} h={19}>
          <circle cx="7" cy="3" r="2" stroke="#333" />
          <path d="M1 4.500 5 7v4l-2 6M13 4.500 9 7v4l2 6M7 11v2" stroke="#333" strokeWidth="1.600" />
        </Icon>
      </span>
      <input
        type="range"
        aria-label="Zoom"
        defaultValue={51}
        className="mr-[6px] ml-auto h-[2px] w-[128px] appearance-none bg-[#8a8a8a] [&::-webkit-slider-thumb]:h-[15px] [&::-webkit-slider-thumb]:w-[6px] [&::-webkit-slider-thumb]:appearance-none [&::-webkit-slider-thumb]:bg-[#555]"
      />
      <button type="button" aria-label="Zoom in">
        <Icon w={11}>
          <path d="M5.500 0v11M0 5.500h11" stroke="#333" />
        </Icon>
      </button>
      <span className="ml-4">100%</span>
    </div>
  );
}

function Taskbar() {
  return (
    <footer className="relative flex h-[53px] shrink-0 items-center justify-center overflow-hidden bg-[#f2f2f1] text-[14px] text-[#222]">
      <div className="flex items-center pt-[9px]">
        <button type="button" aria-label="Start">
          <svg width="31" height="31" viewBox="0 0 31 31" aria-hidden="true">
            <path d="M0 0h15v15H0zM16 0h15v15H16zM0 16h15v15H0zM16 16h15v15H16z" fill="#1e96e0" />
          </svg>
        </button>
        <div className="ml-[19px] flex h-[36px] w-[124px] items-center gap-2 rounded-full bg-[#fcfcfc] px-7 shadow-[0_1px_1px_rgba(0,0,0,0.1)]">
          <Icon w={17}>
            <circle cx="11" cy="6" r="5" stroke="#222" />
            <path d="m7 10-6 6.500" stroke="#222" strokeWidth="2" />
          </Icon>
          Search
        </div>
        <button type="button" aria-label="File Explorer" className="ml-[19px]">
          <svg width="31" height="32" viewBox="0 0 31 32" className="overflow-visible" aria-hidden="true">
            <path d="M0 2h12l3 4h16v23H0z" fill="#f9c336" />
            <path d="M5 29v-5a4 4 0 0 1 4-4h13a4 4 0 0 1 4 4v5z" fill="#1474c8" />
            <rect x="11" y="36" width="8" height="6" rx="2" fill="#888" />
          </svg>
        </button>
        <button type="button" aria-label="Edge" className="ml-[25px]">
          <svg width="31" height="31" viewBox="0 0 31 31" className="overflow-visible" aria-hidden="true">
            <circle cx="15" cy="15" r="15" fill="#1468b8" />
            <path d="M1 12C5 0 24-2 30 13c0 6-5 8-11 7 2-5-1-11-8-11-5 0-8 1-10 3z" fill="#2fb5d8" />
            <path d="M17 10c5-2 13 0 13 4 0 5-6 7-11 6 2-4 1-7-2-10z" fill="#52c878" />
            <path d="M16 12c-3 8 4 12 14 9l-1 3c-7 2-17-1-13-12z" fill="#f2f2f1" />
            <rect x="11" y="35" width="8" height="6" rx="2" fill="#888" />
          </svg>
        </button>
        <button type="button" aria-label="Store" className="ml-[25px]">
          <svg width="31" height="31" viewBox="0 0 31 31" aria-hidden="true">
            <rect width="31" height="31" rx="5" fill="#1d3e70" />
            <path d="M9 9h6v6H9z" fill="#f25022" />
            <path d="M16 9h6v6h-6z" fill="#7fba00" />
            <path d="M9 16h6v7H9z" fill="#35a8e8" />
            <path d="M16 16h6v7h-6z" fill="#f5c52c" />
          </svg>
        </button>
        <button type="button" aria-label="Excel" className="relative ml-[17px] flex w-[50px] justify-center rounded bg-white py-2">
          <ExcelLogo size={31} />
          <span className="absolute bottom-0 h-[3px] w-5 rounded-full bg-[#1e6fb8]" />
        </button>
        <button type="button" aria-label="Settings" className="ml-[17px]">
          <svg width="30" height="30" viewBox="0 0 30 30" aria-hidden="true">
            <circle cx="15" cy="15" r="11" fill="#6d747c" />
            <path d="m8 2 14 26M22 2 8 28M0 15h30" stroke="#6d747c" strokeWidth="6" />
            <circle cx="15" cy="14" r="7" fill="#2b5c94" />
            <circle cx="15" cy="14" r="4.500" fill="#e8e8e8" />
          </svg>
        </button>
      </div>
      <div className="absolute top-0 right-[26px] flex h-full items-center">
        <Icon w={17} h={10}>
          <path d="m1 9 7.500-7L16 9" stroke="#222" />
        </Icon>
        <span className="ml-[17px] pt-[11px]">
          <Icon w={20} h={20}>
            <path d="M5 3h14v11H5zM1 7v7h5M9 14v4M15 14v4M5 18.500h12" stroke="#222" />
          </Icon>
        </span>
        <span className="ml-3 pt-[7px]">
          <Icon w={22} h={20}>
            <path d="M1 7h4l5-5v16l-5-5H1zM13 7c2 2 2 4 0 6M16 4c4 4 4 8 0 12" stroke="#222" />
            <path d="M19 2c4 5 4 11 0 16" stroke="#999" />
          </Icon>
        </span>
        <div className="ml-4 w-[72px] pt-[6px] text-right text-[14px] leading-[21px] whitespace-nowrap">
          <div>11:15 AM</div>
          <div>5/19/2023</div>
        </div>
        <span className="mt-[6px] ml-[10px] flex size-5 items-center justify-center rounded-full bg-[#0f73c4] text-[12px] text-white">4</span>
      </div>
    </footer>
  );
}

export default function App() {
  return (
    <div className="relative flex h-screen flex-col overflow-hidden border-y-[34px] border-black bg-[#efefee] font-['Open_Sans','Noto_Sans',sans-serif]">
      <TitleBar />
      <TabRow />
      <Ribbon />
      <FormulaBar />
      <Sheet />
      <SheetTabs />
      <StatusBar />
      <Taskbar />

      {/* video caption */}
      <p className="absolute bottom-5 left-[125px] bg-[#458aea] px-[18px] pb-2 font-[Roboto,sans-serif] text-[77px] leading-[99px] whitespace-nowrap text-white">
        Select the sheet or range to make a PDF file for
      </p>
    </div>
  );
}
